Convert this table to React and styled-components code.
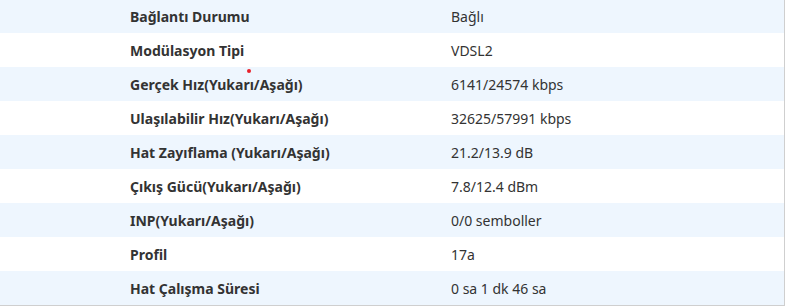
import React from "react";
import styled, { createGlobalStyle } from "styled-components";

const Global = createGlobalStyle`
  html, body { margin: 0; padding: 0; background: #ffffff; }
  body { font-family: "Noto Sans", "Open Sans", sans-serif; overflow: hidden; }
`;

const Table = styled.div`
  width: 784px;
  margin-top: -1px;
  border-right: 1px solid #cfcfcf;
  border-bottom: 1px solid #cfcfcf;
  position: relative;
`;

const Row = styled.div`
  display: grid;
  grid-template-columns: 321px 1fr;
  align-items: center;
  height: 34px;
  padding-left: 130px;
  background: ${(p) => (p.$shaded ? "#eef6fe" : "#ffffff")};
`;

const Label = styled.div`
  font-size: 14px;
  font-weight: 700;
  color: #333333;
  white-space: nowrap;
`;

const Value = styled.div`
  font-size: 14px;
  font-weight: 400;
  color: #333333;
  white-space: nowrap;
`;

const Dot = styled.span`
  position: absolute;
  left: 247px;
  top: 70px;
  width: 4px;
  height: 4px;
  border-radius: 50%;
  background: #e8202a;
`;

const rows = [
  ["Bağlantı Durumu", "Bağlı"],
  ["Modülasyon Tipi", "VDSL2"],
  ["Gerçek Hız(Yukarı/Aşağı)", "6141/24574 kbps"],
  ["Ulaşılabilir Hız(Yukarı/Aşağı)", "32625/57991 kbps"],
  ["Hat Zayıflama (Yukarı/Aşağı)", "21.2/13.9 dB"],
  ["Çıkış Gücü(Yukarı/Aşağı)", "7.8/12.4 dBm"],
  ["INP(Yukarı/Aşağı)", "0/0 semboller"],
  ["Profil", "17a"],
  ["Hat Çalışma Süresi", "0 sa 1 dk 46 sa"],
];

export default function App() {
  return (
    <>
      <Global />
      <Table>
        {rows.map(([l, v], i) => (
          <Row key={l} $shaded={i % 2 === 0}>
            <Label>{l}</Label>
            <Value>{v}</Value>
          </Row>
        ))}
        <Dot />
      </Table>
    </>
  );
}
